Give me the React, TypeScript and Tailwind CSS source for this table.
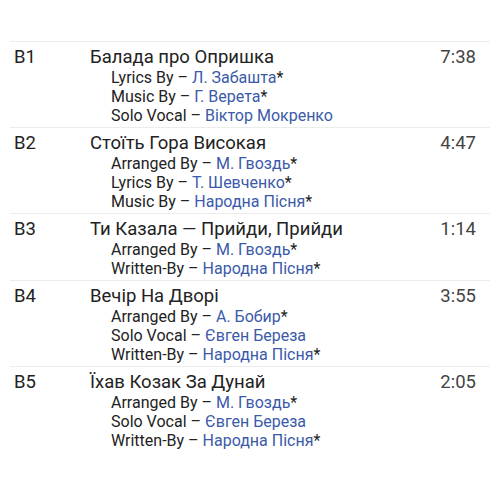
const tracks = [
  {
    pos: 'B1',
    title: 'Балада про Опришка',
    duration: '7:38',
    credits: [
      { role: 'Lyrics By', name: 'Л. Забашта', star: true },
      { role: 'Music By', name: 'Г. Верета', star: true },
      { role: 'Solo Vocal', name: 'Віктор Мокренко', star: false },
    ],
  },
  {
    pos: 'B2',
    title: 'Стоїть Гора Високая',
    duration: '4:47',
    credits: [
      { role: 'Arranged By', name: 'М. Гвоздь', star: true },
      { role: 'Lyrics By', name: 'Т. Шевченко', star: true },
      { role: 'Music By', name: 'Народна Пісня', star: true },
    ],
  },
  {
    pos: 'B3',
    title: 'Ти Казала — Прийди, Прийди',
    duration: '1:14',
    credits: [
      { role: 'Arranged By', name: 'М. Гвоздь', star: true },
      { role: 'Written-By', name: 'Народна Пісня', star: true },
    ],
  },
  {
    pos: 'B4',
    title: 'Вечір На Дворі',
    duration: '3:55',
    credits: [
      { role: 'Arranged By', name: 'А. Бобир', star: true },
      { role: 'Solo Vocal', name: 'Євген Береза', star: false },
      { role: 'Written-By', name: 'Народна Пісня', star: true },
    ],
  },
  {
    pos: 'B5',
    title: 'Їхав Козак За Дунай',
    duration: '2:05',
    credits: [
      { role: 'Arranged By', name: 'М. Гвоздь', star: true },
      { role: 'Solo Vocal', name: 'Євген Береза', star: false },
      { role: 'Written-By', name: 'Народна Пісня', star: true },
    ],
  },
]

export default function App() {
  return (
    <div className="w-[500px] h-[500px] bg-white pt-[41px] px-[10px] font-['Roboto','Noto_Sans',sans-serif] text-[#222222]">
      {tracks.map((track) => (
        <div key={track.pos} className="flex pt-[4px] pb-[2px] border-t border-[#ececec]">
          <div className="w-[80px] pl-[4px] text-[18.5px] leading-[22px]">{track.pos}</div>
          <div className="flex-1">
            <div className="text-[18.5px] leading-[22px]">{track.title}</div>
            <div className="pl-[21px]">
              {track.credits.map((c) => (
                <div key={c.role} className="text-[16px] leading-[19px]">
                  {c.role} – <span className="text-[#3b5aa9]">{c.name}</span>
                  {c.star && '*'}
                </div>
              ))}
            </div>
          </div>
          <div className="pr-[14px] text-[18.5px] leading-[22px] text-[#444444]">{track.duration}</div>
        </div>
      ))}
    </div>
  )
}
